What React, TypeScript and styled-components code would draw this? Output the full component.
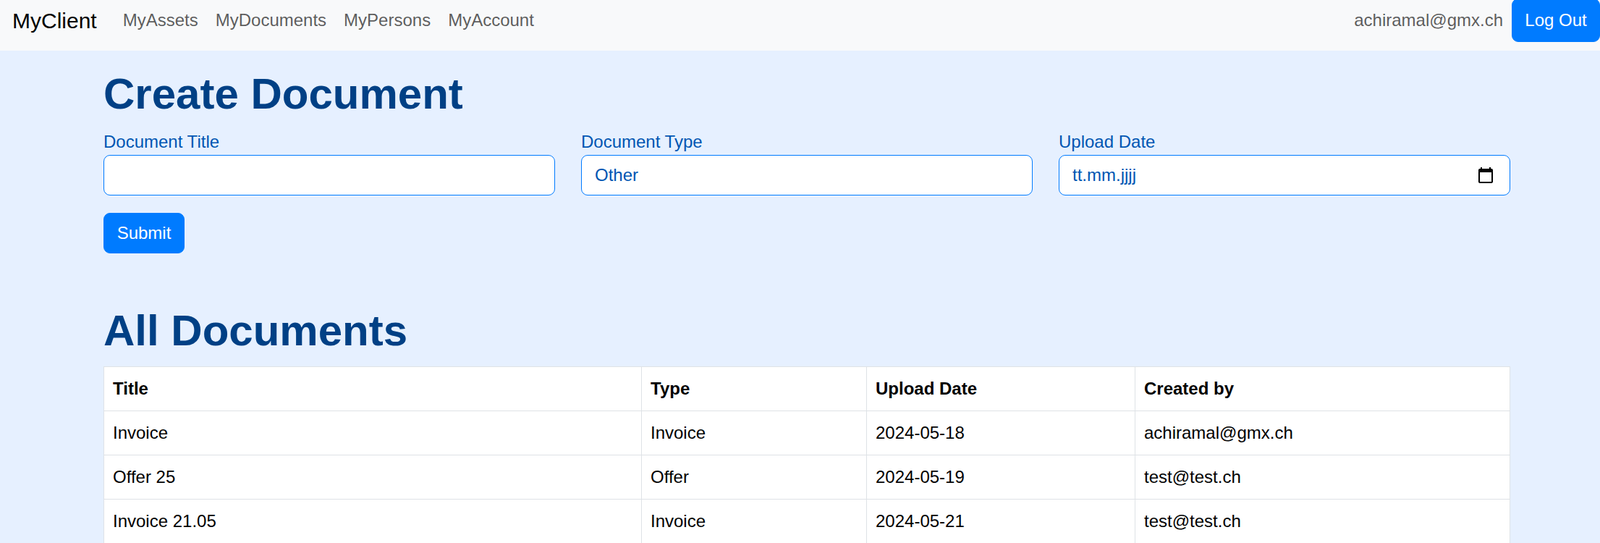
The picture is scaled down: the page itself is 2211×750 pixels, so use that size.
import React from 'react';
import styled, { createGlobalStyle } from 'styled-components';

const GlobalStyle = createGlobalStyle`
  html, body {
    margin: 0;
    height: 750px;
    overflow: hidden;
    background-color: #e6f0ff;
    font-family: "Liberation Sans", Arial, sans-serif;
    font-size: 24px;
    line-height: 36px;
    color: #000;
  }
  * {
    box-sizing: border-box;
  }
`;

const NavBar = styled.nav`
  display: flex;
  align-items: flex-start;
  height: 70px;
  padding-left: 17px;
  background-color: #f8f9fa;
`;

const Brand = styled.a`
  margin-right: 24px;
  padding-top: 11px;
  font-size: 30px;
  line-height: 36px;
  color: #000;
`;

const NavLinks = styled.div`
  display: flex;
  flex: 1;
  padding-top: 10px;
`;

const NavLink = styled.a`
  padding: 0 12px;
  color: rgba(0, 0, 0, 0.65);
`;

const UserMail = styled.span`
  margin-right: 12px;
  padding-top: 10px;
  color: rgba(0, 0, 0, 0.65);
`;

const Button = styled.button`
  width: 112px;
  height: 56px;
  padding: 0;
  border: 1px solid #007bff;
  border-radius: 9px;
  background-color: #007bff;
  font: inherit;
  color: #fff;
`;

const LogoutButton = styled(Button)`
  width: 122px;
  height: 60px;
  margin-top: -2px;
`;

const Page = styled.main`
  width: 1944px;
  margin-left: 143px;
  padding-top: 24px;
`;

const Heading = styled.h1<{ $spaced?: boolean }>`
  margin: ${(p) => (p.$spaced ? '71px' : '0')} 0 ${(p) => (p.$spaced ? '13px' : '12px')};
  font-size: 60px;
  font-weight: 700;
  line-height: 72px;
  color: #004085;
`;

const FormRow = styled.div`
  display: grid;
  grid-template-columns: repeat(3, 1fr);
  gap: 36px;
  margin-bottom: 24px;
`;

const Field = styled.label`
  display: block;
  color: #0056b3;
`;

const InputBox = styled.div`
  position: relative;
`;

const Input = styled.input`
  display: block;
  width: 100%;
  height: 56px;
  padding: 0 18px;
  border: 1px solid #007bff;
  border-radius: 9px;
  outline: none;
  background-color: #fff;
  font: inherit;
  color: #0056b3;
`;

const Select = styled(Input).attrs({ as: 'select' })`
  appearance: none;
`;

const CalendarIcon = styled.svg`
  position: absolute;
  top: 16px;
  right: 22px;
  width: 24px;
  height: 24px;
  fill: #000;
`;

const TableCard = styled.table`
  width: 100%;
  table-layout: fixed;
  border-collapse: separate;
  border-spacing: 0;
  border: 1px solid #dee2e6;
  border-bottom: 0;
  background-color: #fff;
`;

const HeadCell = styled.th`
  height: 61px;
  padding: 12px;
  border-bottom: 1px solid #dee2e6;
  border-left: 1px solid #dee2e6;
  font-weight: 700;
  text-align: left;

  &:first-child {
    border-left: 0;
  }
`;

const Cell = styled.td`
  height: 61px;
  padding: 12px;
  border-bottom: 1px solid #dee2e6;
  border-left: 1px solid #dee2e6;

  &:first-child {
    border-left: 0;
  }
`;

const documents = [
  { title: 'Invoice', type: 'Invoice', date: '2024-05-18', by: 'achiramal@gmx.ch' },
  { title: 'Offer 25', type: 'Offer', date: '2024-05-19', by: 'test@test.ch' },
  { title: 'Invoice 21.05', type: 'Invoice', date: '2024-05-21', by: 'test@test.ch' },
];

const App: React.FC = () => {
  return (
    <>
      <GlobalStyle />
      <NavBar>
        <Brand>MyClient</Brand>
        <NavLinks>
          <NavLink>MyAssets</NavLink>
          <NavLink>MyDocuments</NavLink>
          <NavLink>MyPersons</NavLink>
          <NavLink>MyAccount</NavLink>
        </NavLinks>
        <UserMail>achiramal@gmx.ch</UserMail>
        <LogoutButton>Log Out</LogoutButton>
      </NavBar>
      <Page>
        <Heading>Create Document</Heading>
        <FormRow>
          <Field>
            Document Title
            <Input type="text" />
          </Field>
          <Field>
            Document Type
            <Select defaultValue="Other">
              <option>Invoice</option>
              <option>Offer</option>
              <option>Other</option>
            </Select>
          </Field>
          <Field>
            Upload Date
            <InputBox>
              <Input type="text" defaultValue="tt.mm.jjjj" />
              <CalendarIcon viewBox="0 0 24 24">
                <path d="M20 3h-1V1h-2v2H7V1H5v2H4c-1.1 0-2 .9-2 2v16c0 1.1.9 2 2 2h16c1.1 0 2-.9 2-2V5c0-1.1-.9-2-2-2zm0 18H4V8h16v13z" />
              </CalendarIcon>
            </InputBox>
          </Field>
        </FormRow>
        <Button>Submit</Button>
        <Heading $spaced>All Documents</Heading>
        <TableCard>
          <colgroup>
            <col style={{ width: 742 }} />
            <col style={{ width: 311 }} />
            <col style={{ width: 371 }} />
            <col />
          </colgroup>
          <thead>
            <tr>
              <HeadCell>Title</HeadCell>
              <HeadCell>Type</HeadCell>
              <HeadCell>Upload Date</HeadCell>
              <HeadCell>Created by</HeadCell>
            </tr>
          </thead>
          <tbody>
            {documents.map((doc) => (
              <tr key={doc.title}>
                <Cell>{doc.title}</Cell>
                <Cell>{doc.type}</Cell>
                <Cell>{doc.date}</Cell>
                <Cell>{doc.by}</Cell>
              </tr>
            ))}
          </tbody>
        </TableCard>
      </Page>
    </>
  );
};

export default App;
